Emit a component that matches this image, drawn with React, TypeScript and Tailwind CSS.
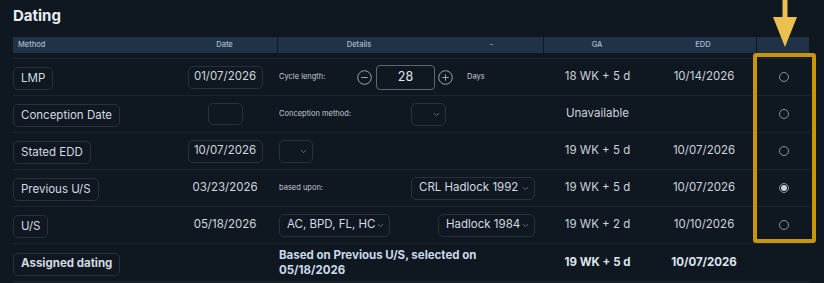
import { ChevronDown } from 'lucide-react'

const font = { fontFamily: 'Inter, "Noto Sans", sans-serif' }

function Tag({ label, bold }: { label: string; bold?: boolean }) {
  return (
    <span
      className={`inline-flex h-[23px] items-center whitespace-nowrap rounded-[5px] border border-[#27323e] px-[7px] text-[11.5px] text-[#d3dbe3] ${bold ? 'font-bold' : ''}`}
    >
      {label}
    </span>
  )
}

function Select({ value, w }: { value?: string; w: string }) {
  return (
    <div
      className={`flex h-[23px] items-center justify-between whitespace-nowrap rounded-[5px] border border-[#27323e] pl-[7px] pr-[4px] text-[11.5px] text-[#d3dbe3] ${w}`}
    >
      <span>{value}</span>
      <ChevronDown size={9} className="text-[#7d8896]" />
    </div>
  )
}

function Radio({ checked }: { checked?: boolean }) {
  return (
    <span className="flex h-[10px] w-[10px] items-center justify-center rounded-full border border-[#8a95a1]">
      {checked && <span className="h-[6px] w-[6px] rounded-full bg-[#c9d0d8]" />}
    </span>
  )
}

function Circle({ plus }: { plus?: boolean }) {
  return (
    <svg width="15" height="15" viewBox="0 0 15 15" className="text-[#9aa5b1]">
      <circle cx="7.5" cy="7.5" r="6.8" fill="none" stroke="currentColor" strokeWidth="1" />
      <path d="M4.3 7.5h6.4" stroke="currentColor" strokeWidth="1" />
      {plus && <path d="M7.5 4.3v6.4" stroke="currentColor" strokeWidth="1" />}
    </svg>
  )
}

type Row = {
  method: string
  date: React.ReactNode
  details: React.ReactNode
  ga: string
  edd: string
  radio?: 'on' | 'off'
  bold?: boolean
}

const label = 'whitespace-nowrap text-[7.5px] text-[#c3ccd5]'
const dateBox =
  'inline-flex h-[23px] w-[75px] items-center justify-center rounded-[5px] border border-[#27323e] text-[11.5px]'

const rows: Row[] = [
  {
    method: 'LMP',
    date: <span className={dateBox}>01/07/2026</span>,
    details: (
      <div className="flex items-center">
        <span className={`w-[78px] ${label}`}>Cycle length:</span>
        <Circle />
        <span className="ml-[4px] flex h-[25px] w-[59px] items-center justify-center rounded-[4px] border border-[#5e6874] text-[12.5px] text-[#e1e7ed]">
          28
        </span>
        <span className="ml-[3px]">
          <Circle plus />
        </span>
        <span className={`ml-[14px] ${label}`}>Days</span>
      </div>
    ),
    ga: '18 WK + 5 d',
    edd: '10/14/2026',
    radio: 'off',
  },
  {
    method: 'Conception Date',
    date: <span className="inline-block h-[22px] w-[35px] rounded-[5px] border border-[#27323e]" />,
    details: (
      <div className="flex items-center">
        <span className={`w-[132px] ${label}`}>Conception method:</span>
        <Select w="w-[35px]" />
      </div>
    ),
    ga: 'Unavailable',
    edd: '',
    radio: 'off',
  },
  {
    method: 'Stated EDD',
    date: <span className={dateBox}>10/07/2026</span>,
    details: <Select w="w-[34px]" />,
    ga: '19 WK + 5 d',
    edd: '10/07/2026',
    radio: 'off',
  },
  {
    method: 'Previous U/S',
    date: <span className="text-[11.5px]">03/23/2026</span>,
    details: (
      <div className="flex items-center">
        <span className={`w-[132px] ${label}`}>based upon:</span>
        <Select value="CRL Hadlock 1992" w="w-[124px]" />
      </div>
    ),
    ga: '19 WK + 5 d',
    edd: '10/07/2026',
    radio: 'on',
  },
  {
    method: 'U/S',
    date: <span className="text-[11.5px]">05/18/2026</span>,
    details: (
      <div className="flex items-center gap-[48px]">
        <Select value="AC, BPD, FL, HC" w="w-[111px]" />
        <Select value="Hadlock 1984" w="w-[97px]" />
      </div>
    ),
    ga: '19 WK + 2 d',
    edd: '10/10/2026',
    radio: 'off',
  },
  {
    method: 'Assigned dating',
    date: null,
    details: (
      <p className="text-[11.5px] font-bold leading-[15px] text-[#cbdbeb]">
        Based on Previous U/S, selected on
        <br />
        05/18/2026
      </p>
    ),
    ga: '19 WK + 5 d',
    edd: '10/07/2026',
    bold: true,
  },
]

export default function App() {
  return (
    <div className="relative h-[283px] w-[824px] overflow-hidden bg-[#0f1720] px-[13px]" style={font}>
      <h1 className="pt-[6px] text-[15px] font-bold leading-[20px] text-[#e8eef4]">Dating</h1>

      {/* header */}
      <div className="mt-[11px] flex h-[16px] w-[797px] gap-px text-[7.5px] font-medium text-[#aebbc9]">
        <div className="flex w-[264px] items-center bg-[#1f3247]">
          <span className="w-[159px] pl-[5px]">Method</span>
          <span className="w-[105px] text-center">Date</span>
        </div>
        <div className="flex w-[265px] items-center bg-[#1f3247]">
          <span className="w-[162px] text-center">Details</span>
          <span className="w-[103px] text-center">-</span>
        </div>
        <div className="flex w-[212px] items-center bg-[#1f3247]">
          <span className="w-[106px] text-center">GA</span>
          <span className="w-[106px] text-center">EDD</span>
        </div>
        <div className="w-[52px] bg-[#1f3247]" />
      </div>

      {/* body */}
      <div className="mt-[5px] w-[797px] border-b border-[#1b2530]">
        {rows.map((r, i) => (
          <div
            key={r.method}
            className={`grid grid-cols-[159px_106px_266px_107px_106px_53px] items-center border-t border-[#1b2530] ${i === rows.length - 1 ? 'h-[38px]' : 'h-[37px]'}`}
          >
            <div>
              <Tag label={r.method} bold={r.bold} />
            </div>
            <div className="flex justify-center text-[#cfd7df]">{r.date}</div>
            <div className="pl-px">{r.details}</div>
            <div className={`text-center text-[11.5px] ${r.bold ? 'font-bold text-[#dde5ee]' : 'text-[#ccd4dc]'}`}>{r.ga}</div>
            <div className={`text-center text-[11.5px] ${r.bold ? 'font-bold text-[#dde5ee]' : 'text-[#ccd4dc]'}`}>{r.edd}</div>
            <div className="flex justify-center">{r.radio && <Radio checked={r.radio === 'on'} />}</div>
          </div>
        ))}
      </div>

      {/* highlight overlay */}
      <div className="absolute left-[753px] top-[53px] h-[190px] w-[63px] rounded-[3px] border-[4px] border-[#c7960d]" />
      <svg className="absolute left-[772px] top-0" width="26" height="48" viewBox="0 0 26 48">
        <rect x="10.5" y="0" width="5" height="19" fill="#ecc04e" />
        <path d="M1 17 H25 L13 47 Z" fill="#ecc04e" />
      </svg>
    </div>
  )
}
